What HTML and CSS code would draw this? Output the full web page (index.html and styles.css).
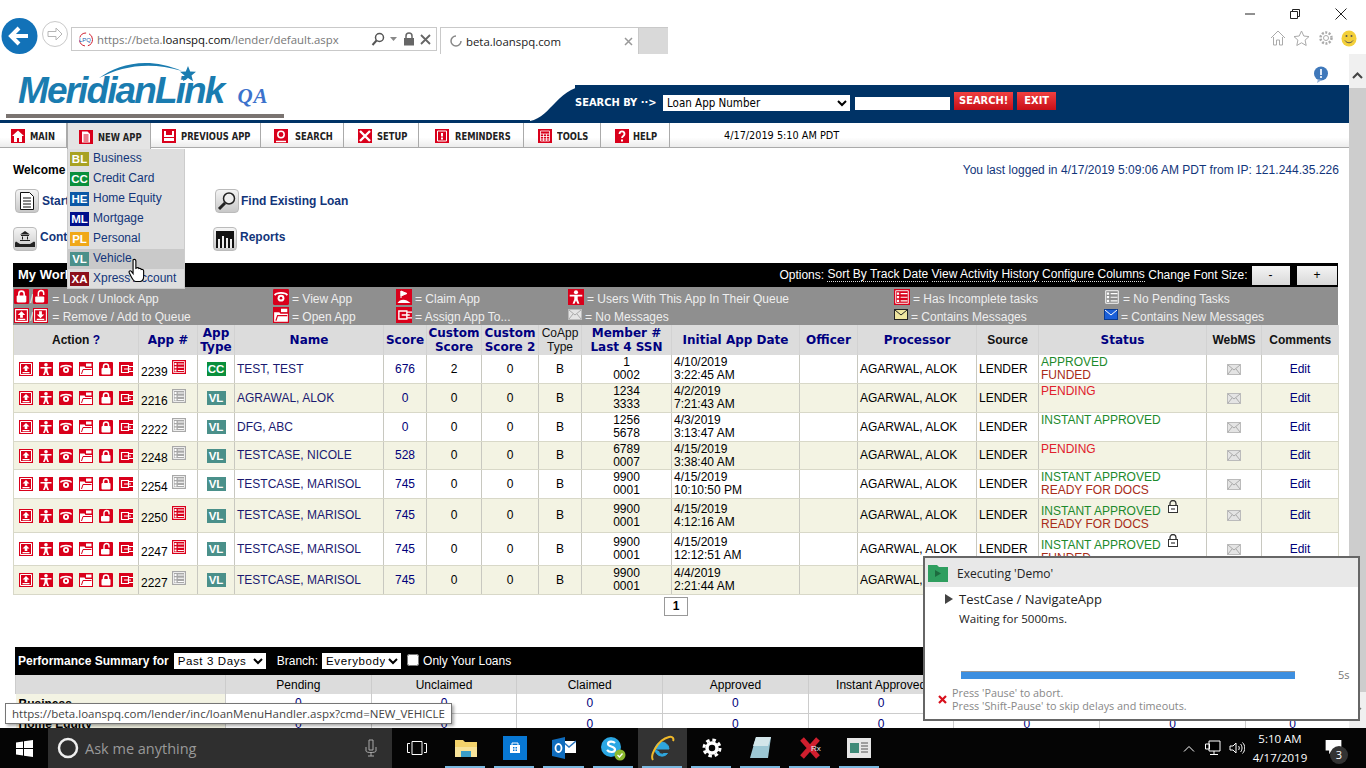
FILE: index.html
```html
<!DOCTYPE html>
<html lang="en">
<head>
  <meta charset="utf-8">
  <title>MeridianLink QA</title>
  <link rel="stylesheet" href="styles.css">
</head>
<body>

<svg class="defs" width="0" height="0" aria-hidden="true">
  <symbol id="i-queue" viewBox="0 0 14 14"><rect width="14" height="14" fill="#d9001b"/><path d="M1.500 1.500h11v11h-11z" fill="none" stroke="#fff"/><path d="M7 3l3.500 3.500H8.300V9H5.700V6.500H3.500zM3.500 10h7v1.300h-7z" fill="#fff"/></symbol>
  <symbol id="i-add" viewBox="0 0 14 14"><rect width="14" height="14" fill="#d9001b"/><path d="M1.500 1.500h11v11h-11z" fill="none" stroke="#fff"/><path d="M7 9.500l-3.500-3.500h2.200V3h2.600v3h2.200zM3.500 10h7v1.300h-7z" fill="#fff"/></symbol>
  <symbol id="i-user" viewBox="0 0 14 14"><rect width="14" height="14" fill="#d9001b"/><circle cx="7" cy="2.800" r="1.800" fill="#fff"/><path d="M1.500 5h11v1.500H8.500V9l1.500 4H8.300L7 10l-1.300 3H4l1.500-4V6.500h-4z" fill="#fff"/></symbol>
  <symbol id="i-view" viewBox="0 0 14 14"><rect width="14" height="14" rx="1" fill="#d9001b"/><path d="M1.500 5.500C3 2.800 11 2.800 12.500 5.500" fill="none" stroke="#fff" stroke-width="1.500"/><circle cx="7" cy="8" r="3" fill="#fff"/><circle cx="7" cy="8" r="1.200" fill="#d9001b"/></symbol>
  <symbol id="i-open" viewBox="0 0 14 14"><rect width="14" height="14" fill="#d9001b"/><path d="M1 4.500h4.500l1 1.500H13v7H1z" fill="#fff"/><path d="M2.500 12l1.500-4.500h8.500" fill="none" stroke="#d9001b"/><path d="M7 1.500h5.500v3H7z" fill="#fff"/></symbol>
  <symbol id="i-lock" viewBox="0 0 14 14"><rect width="14" height="14" rx="1" fill="#d9001b"/><rect x="2.500" y="6" width="9" height="6.500" rx="1" fill="#fff"/><path d="M4.500 6.500V4.500a2.500 2.500 0 0 1 5 0v2" fill="none" stroke="#fff" stroke-width="1.500"/></symbol>
  <symbol id="i-unlock" viewBox="0 0 14 14"><rect width="14" height="14" rx="1" fill="#d9001b"/><rect x="2" y="7" width="8.500" height="5.500" rx="1" fill="#fff"/><path d="M5 7V4a2.500 2.500 0 0 1 5 0v1.500" fill="none" stroke="#fff" stroke-width="1.400"/></symbol>
  <symbol id="i-assign" viewBox="0 0 14 14"><rect width="14" height="14" fill="#d9001b"/><path d="M2.500 3.500h7v7h-7zM9.500 4.500H14M9.500 9.500H14M5 7h7" fill="none" stroke="#fff" stroke-width="1.200"/></symbol>
  <symbol id="i-claim" viewBox="0 0 16 16"><rect width="16" height="16" fill="#d9001b"/><path d="M5 2v7M5 2l6 2.500L5 7z" stroke="#fff" fill="#fff"/><path d="M1.500 14C4 9.500 10 9.500 14.500 14z" fill="#fff"/></symbol>
  <symbol id="i-tasks" viewBox="0 0 14 14"><rect width="14" height="14" fill="currentColor"/><path d="M1.500 1.500h11v11h-11z" fill="none" stroke="#fff" stroke-width=".8"/><path d="M2.500 3h2v2h-2zM2.500 6.200h2v2h-2zM2.500 9.400h2v2h-2zM5.800 3.500h6v1h-6zM5.800 6.700h6v1h-6zM5.800 9.900h6v1h-6z" fill="#fff"/></symbol>
  <symbol id="i-mail" viewBox="0 0 14 11"><rect x=".5" y=".5" width="13" height="10" fill="#e4e4e4" stroke="#bbb"/><path d="M1 1l6 5 6-5M1 10l4-5M13 10L9 5" fill="none" stroke="#aaa"/></symbol>
  <symbol id="i-smlock" viewBox="0 0 12 13"><path d="M3 6V3.500a3 3 0 0 1 6 0V6" fill="none" stroke="#333" stroke-width="1.300"/><rect x="1.500" y="5.500" width="9" height="7" fill="#fff" stroke="#333"/><path d="M4 8h4v2H4z" fill="#888"/></symbol>
</svg>

<!-- browser frame -->
<div class="chrome">
  <div class="nav-btns">
    <svg class="back" width="38" height="36" viewBox="0 0 38 36"><circle cx="18.500" cy="18" r="18" fill="#1272b8"/><path d="M27 18H11M18 10l-8 8 8 8" fill="none" stroke="#fff" stroke-width="4"/></svg>
    <svg class="fwd" width="28" height="28" viewBox="0 0 28 28"><circle cx="14" cy="14" r="12.500" fill="#fff" stroke="#c9c9c9"/><path d="M7 11.500h8V8l6 6-6 6v-3.500H7z" fill="none" stroke="#b5b5b5"/></svg>
  </div>
  <div class="addr">
    <svg class="fav" width="15" height="15" viewBox="0 0 15 15"><circle cx="8" cy="7.500" r="6.500" fill="#fff" stroke="#d02030" stroke-dasharray="8 3"/><text x="1" y="10" font-size="6" font-family="Liberation Sans" fill="#1a5fb0">LPQ</text></svg>
    <span class="url">https://beta.<b>loanspq.com</b>/lender/default.aspx</span>
    <svg width="14" height="14" viewBox="0 0 14 14"><circle cx="8.500" cy="5.500" r="4" fill="none" stroke="#555" stroke-width="1.500"/><path d="M5.500 8.500L1.500 13" stroke="#555" stroke-width="2"/></svg>
    <svg width="8" height="6" viewBox="0 0 8 6"><path d="M0 1h7L3.500 5z" fill="#888"/></svg>
    <svg width="12" height="14" viewBox="0 0 12 14"><path d="M3 6V4a3 3 0 0 1 6 0v2" fill="none" stroke="#666" stroke-width="1.500"/><rect x="1" y="6" width="10" height="7.500" fill="#666"/></svg>
    <svg width="11" height="11" viewBox="0 0 11 11"><path d="M1 1l9 9M10 1l-9 9" stroke="#666" stroke-width="1.800"/></svg>
  </div>
  <div class="tab">
    <svg width="12" height="12" viewBox="0 0 12 12"><path d="M6 1a5 5 0 1 0 5 5" fill="none" stroke="#888" stroke-width="1.500"/></svg>
    <span class="tab-title">beta.loanspq.com</span>
    <svg class="tab-x" width="9" height="9" viewBox="0 0 9 9"><path d="M1 1l7 7M8 1L1 8" stroke="#999" stroke-width="1.500"/></svg>
  </div>
  <div class="new-tab"></div>
  <div class="chrome-right">
    <div class="win-btns">
      <svg width="10" height="10" viewBox="0 0 10 10"><path d="M0 5h10" stroke="#222"/></svg>
      <svg width="10" height="10" viewBox="0 0 10 10"><path d="M.5 2.500h7v7h-7zM2.500 2.500v-2h7v7h-2" fill="none" stroke="#222"/></svg>
      <svg width="12" height="12" viewBox="0 0 12 12"><path d="M.5.500l11 11M11.500.500l-11 11" stroke="#222"/></svg>
    </div>
    <div class="tool-btns">
      <svg width="16" height="16" viewBox="0 0 16 16"><path d="M1 8l7-7 7 7M3.500 7v8h3v-5h3v5h3V7" fill="none" stroke="#aaa"/></svg>
      <svg width="17" height="17" viewBox="0 0 17 17"><path d="M8.500 1l2.300 5 5.200.6-3.900 3.500 1.100 5.400-4.700-2.700-4.700 2.700 1.100-5.400L1 6.600 6.200 6z" fill="none" stroke="#aaa"/></svg>
      <svg width="16" height="16" viewBox="0 0 16 16"><circle cx="8" cy="8" r="2.500" fill="none" stroke="#aaa"/><circle cx="8" cy="8" r="5.500" fill="none" stroke="#aaa" stroke-width="2.500" stroke-dasharray="2 1.500"/></svg>
      <svg width="16" height="17" viewBox="0 0 16 17"><ellipse cx="8" cy="8.500" rx="7.500" ry="8" fill="#f3cf3a"/><circle cx="5.500" cy="6" r="1" fill="#555"/><circle cx="10.500" cy="6" r="1" fill="#555"/><path d="M4 10.500c2 3 6 3 8 0" fill="none" stroke="#555"/></svg>
    </div>
  </div>
</div>

<div class="frame">
  <div class="page">

    <header class="masthead">
      <div class="logo-side">
        <div class="logo">
          <span class="logo-name">MeridianLink</span><span class="logo-qa">QA</span>
          <svg class="logo-arc" width="100" height="30" viewBox="0 0 100 30"><path d="M1 20C20 6 50-2 84 13C52 3 24 8 1 20z" fill="#1a7cb0"/><path d="M90 8l2.200 5.500 5.800.3-4.500 3.700 1.500 5.700-5-3.200-5 3.200 1.500-5.700-4.500-3.700 5.800-.3z" fill="#1a7cb0"/></svg>
        </div>
        <div class="logo-rule"></div>
      </div>
      <div class="mast-right">
        <div class="mast-top">
          <svg width="16" height="17" viewBox="0 0 16 17"><circle cx="8" cy="7.500" r="7" fill="#3f78ba"/><path d="M5 13l-1 4 5-3z" fill="#8fb0d8"/><path d="M7 3h2v6H7zM7 10h2v2H7z" fill="#dde8f6"/></svg>
        </div>
        <div class="band">
          <svg class="band-curve" width="74" height="38" viewBox="0 0 74 38"><path d="M0 36C22 32 28 0 62 0h12v38H0z" fill="#003366"/></svg>
          <div class="band-fill">
            <span class="search-by">SEARCH BY ··&gt;</span>
            <select class="search-sel"><option>Loan App Number</option></select>
            <input class="search-box" type="text">
            <button class="red-btn">SEARCH!</button>
            <button class="red-btn exit">EXIT</button>
          </div>
        </div>
      </div>
    </header>

    <nav class="menu">
      <a class="menu-item w-main"><svg class="menu-ic" viewBox="0 0 14 14"><rect width="14" height="14" fill="#d9001b"/><path d="M7 1.500L1 7h2v6h3V9h2v4h3V7h2z" fill="#fff"/></svg><span class="menu-text">MAIN</span></a>
      <a class="menu-item w-new on"><svg class="menu-ic" viewBox="0 0 14 14"><rect width="14" height="14" fill="#d9001b"/><path d="M3 1.500h5.500L11 4v8.500H3z" fill="#fff"/><path d="M4.500 5h5M4.500 7h5M4.500 9h5M4.500 11h5" stroke="#d9001b"/></svg><span class="menu-text">NEW APP</span></a>
      <a class="menu-item w-prev"><svg class="menu-ic" viewBox="0 0 14 14"><rect width="14" height="14" fill="#d9001b"/><path d="M2 2h10v10H2z" fill="#fff"/><path d="M4 1h6v5H4z" fill="#d9001b"/><path d="M2 8h10v1H2z" fill="#d9001b"/></svg><span class="menu-text">PREVIOUS APP</span></a>
      <a class="menu-item w-search"><svg class="menu-ic" viewBox="0 0 14 14"><rect width="14" height="14" fill="#d9001b"/><circle cx="7" cy="5.500" r="3.200" fill="none" stroke="#fff" stroke-width="1.500"/><path d="M2 12.500h10" stroke="#fff" stroke-width="1.500"/></svg><span class="menu-text">SEARCH</span></a>
      <a class="menu-item w-setup"><svg class="menu-ic" viewBox="0 0 14 14"><rect width="14" height="14" fill="#d9001b"/><path d="M2 2l10 10M12 2L2 12" stroke="#fff" stroke-width="2.400"/></svg><span class="menu-text">SETUP</span></a>
      <a class="menu-item w-rem"><svg class="menu-ic" viewBox="0 0 14 14"><rect width="14" height="14" fill="#d9001b"/><path d="M2.500 2h9v10h-9z" fill="none" stroke="#fff"/><path d="M6 4h2v3.500H6zM6 8.500h2v2H6z" fill="#fff"/></svg><span class="menu-text">REMINDERS</span></a>
      <a class="menu-item w-tools"><svg class="menu-ic" viewBox="0 0 14 14"><rect width="14" height="14" fill="#d9001b"/><path d="M2.500 2h9v10h-9zM2.500 5h9M2.500 7.500h9M2.500 10h9M5.500 5v7M8.500 5v7" fill="none" stroke="#fff" stroke-width=".8"/></svg><span class="menu-text">TOOLS</span></a>
      <a class="menu-item w-help"><svg class="menu-ic" viewBox="0 0 14 14"><rect width="14" height="14" fill="#d9001b"/><path d="M4.500 5c0-3.500 5-3.500 5 0 0 2-2.500 2-2.500 4" fill="none" stroke="#fff" stroke-width="1.800"/><path d="M6 10.500h2v2H6z" fill="#fff"/></svg><span class="menu-text">HELP</span></a>
      <span class="menu-date">4/17/2019 5:10 AM PDT</span>
    </nav>

    <div class="welcome">
      <b>Welcome</b>
      <span class="last-login">You last logged in 4/17/2019 5:09:06 AM PDT from IP: 121.244.35.226</span>
    </div>

    <div class="quick">
      <a class="quick-link q-a"><span class="quick-ic"><svg width="16" height="18" viewBox="0 0 16 18"><path d="M1.500.5h9l4 4v13h-13z" fill="#fff" stroke="#111"/><path d="M4 6h8M4 9h8M4 12h8M4 15h8" stroke="#111"/></svg></span>Start New Loan</a>
      <a class="quick-link q-b"><span class="quick-ic"><svg width="20" height="20" viewBox="0 0 20 20"><circle cx="12" cy="7.500" r="5.500" fill="#eee" stroke="#222" stroke-width="1.500"/><path d="M8 12l-6 6" stroke="#222" stroke-width="3"/></svg></span>Find Existing Loan</a>
      <a class="quick-link q-c"><span class="quick-ic"><svg width="20" height="18" viewBox="0 0 20 18"><path d="M10 1l5 3.500H5zM6 5h8v1H6zM7 6.500h1v3H7zM12 6.500h1v3h-1zM5 10h10v1H5zM1 11.500l4 2.500H-1zM19 11.500l3 2.500h-7zM0 14h20v3H0z" fill="#222"/></svg></span>Contact Us</a>
      <a class="quick-link q-d"><span class="quick-ic"><svg width="18" height="18" viewBox="0 0 18 18"><path d="M0 1h18v17H0z" fill="#111"/><path d="M2 9h2v9H2zM6 6h2v12H6zM10 8h2v10h-2zM14 9h2v9h-2z" fill="#eee"/></svg></span>Reports</a>
    </div>

    <div class="work-bar">
      <b class="work-title">My Work Queue</b>
      <div class="options">
        Options: <a>Sort By Track Date</a> <a>View Activity History</a> <a>Configure Columns</a> Change Font Size:
        <button class="size-btn">-</button><button class="size-btn">+</button>
      </div>
    </div>

    <div class="legend">
      <span><span class="pair"><svg class="lg"><use href="#i-lock"/></svg>/<svg class="lg"><use href="#i-unlock"/></svg></span> = Lock / Unlock App</span>
      <span><svg class="lg"><use href="#i-view"/></svg> = View App</span>
      <span><svg class="lg"><use href="#i-claim"/></svg> = Claim App</span>
      <span><svg class="lg"><use href="#i-user"/></svg> = Users With This App In Their Queue</span>
      <span><svg class="lg red"><use href="#i-tasks"/></svg> = Has Incomplete tasks</span>
      <span><svg class="lg nopend"><use href="#i-tasks"/></svg> = No Pending Tasks</span>
      <span><span class="pair"><svg class="lg"><use href="#i-queue"/></svg>/<svg class="lg"><use href="#i-add"/></svg></span> = Remove / Add to Queue</span>
      <span><svg class="lg"><use href="#i-open"/></svg> = Open App</span>
      <span><svg class="lg"><use href="#i-assign"/></svg> = Assign App To...</span>
      <span><svg class="lg-mail"><use href="#i-mail"/></svg> = No Messages</span>
      <span><svg class="lg-mail yellow" viewBox="0 0 14 11"><rect x=".5" y=".5" width="13" height="10" fill="#efe6a0" stroke="#222"/><path d="M1 1l6 5 6-5" fill="none" stroke="#222"/></svg> = Contains Messages</span>
      <span><svg class="lg-mail" viewBox="0 0 14 11"><rect x=".5" y=".5" width="13" height="10" fill="#1a5fd8" stroke="#0a3a90"/><path d="M1 1l6 5 6-5" fill="none" stroke="#fff"/></svg> = Contains New Messages</span>
    </div>

    <table class="apps">
      <colgroup>
        <col class="c-action"><col class="c-num"><col class="c-type"><col class="c-name"><col class="c-score"><col class="c-cust"><col class="c-cust2"><col class="c-coapp"><col class="c-member"><col class="c-date"><col class="c-officer"><col class="c-proc"><col class="c-src"><col class="c-status"><col class="c-webms"><col class="c-comm">
      </colgroup>
      <thead>
        <tr>
          <th class="plain">Action <span class="navy">?</span></th>
          <th>App #</th><th>App<br>Type</th><th>Name</th><th>Score</th><th>Custom<br>Score</th><th>Custom<br>Score 2</th>
          <th class="thin">CoApp<br>Type</th><th>Member #<br>Last 4 SSN</th><th>Initial App Date</th><th>Officer</th><th>Processor</th>
          <th class="plain">Source</th><th>Status</th><th class="plain">WebMS</th><th class="plain">Comments</th>
        </tr>
      </thead>
      <tbody>
        <tr class="h28">
          <td><div class="acts"><svg><use href="#i-queue"/></svg><svg><use href="#i-user"/></svg><svg><use href="#i-view"/></svg><svg><use href="#i-open"/></svg><svg><use href="#i-lock"/></svg><svg><use href="#i-assign"/></svg></div></td>
          <td class="num">2239<svg class="task red"><use href="#i-tasks"/></svg></td>
          <td class="ctr"><span class="badge cc">CC</span></td>
          <td class="name">TEST, TEST</td><td class="ctr link">676</td><td class="ctr">2</td><td class="ctr">0</td><td class="ctr">B</td>
          <td class="ctr">1<br>0002</td><td>4/10/2019<br>3:22:45 AM</td><td></td><td>AGARWAL, ALOK</td><td>LENDER</td>
          <td class="status"><span class="ok">APPROVED</span><br><span class="fund">FUNDED</span></td>
          <td class="ctr"><svg class="mail"><use href="#i-mail"/></svg></td><td class="ctr link">Edit</td>
        </tr>
        <tr class="alt h29">
          <td><div class="acts"><svg><use href="#i-queue"/></svg><svg><use href="#i-user"/></svg><svg><use href="#i-view"/></svg><svg><use href="#i-open"/></svg><svg><use href="#i-lock"/></svg><svg><use href="#i-assign"/></svg></div></td>
          <td class="num">2216<svg class="task grey"><use href="#i-tasks"/></svg></td>
          <td class="ctr"><span class="badge vl">VL</span></td>
          <td class="name">AGRAWAL, ALOK</td><td class="ctr link">0</td><td class="ctr">0</td><td class="ctr">0</td><td class="ctr">B</td>
          <td class="ctr">1234<br>3333</td><td>4/2/2019<br>7:21:43 AM</td><td></td><td>AGARWAL, ALOK</td><td>LENDER</td>
          <td class="status"><span class="pend">PENDING</span><br>&nbsp;</td>
          <td class="ctr"><svg class="mail"><use href="#i-mail"/></svg></td><td class="ctr link">Edit</td>
        </tr>
        <tr class="h29">
          <td><div class="acts"><svg><use href="#i-queue"/></svg><svg><use href="#i-user"/></svg><svg><use href="#i-view"/></svg><svg><use href="#i-open"/></svg><svg><use href="#i-lock"/></svg><svg><use href="#i-assign"/></svg></div></td>
          <td class="num">2222<svg class="task grey"><use href="#i-tasks"/></svg></td>
          <td class="ctr"><span class="badge vl">VL</span></td>
          <td class="name">DFG, ABC</td><td class="ctr link">0</td><td class="ctr">0</td><td class="ctr">0</td><td class="ctr">B</td>
          <td class="ctr">1256<br>5678</td><td>4/3/2019<br>3:13:47 AM</td><td></td><td>AGARWAL, ALOK</td><td>LENDER</td>
          <td class="status"><span class="ok">INSTANT APPROVED</span><br>&nbsp;</td>
          <td class="ctr"><svg class="mail"><use href="#i-mail"/></svg></td><td class="ctr link">Edit</td>
        </tr>
        <tr class="alt h28">
          <td><div class="acts"><svg><use href="#i-queue"/></svg><svg><use href="#i-user"/></svg><svg><use href="#i-view"/></svg><svg><use href="#i-open"/></svg><svg><use href="#i-lock"/></svg><svg><use href="#i-assign"/></svg></div></td>
          <td class="num">2248<svg class="task grey"><use href="#i-tasks"/></svg></td>
          <td class="ctr"><span class="badge vl">VL</span></td>
          <td class="name">TESTCASE, NICOLE</td><td class="ctr link">528</td><td class="ctr">0</td><td class="ctr">0</td><td class="ctr">B</td>
          <td class="ctr">6789<br>0007</td><td>4/15/2019<br>3:38:40 AM</td><td></td><td>AGARWAL, ALOK</td><td>LENDER</td>
          <td class="status"><span class="pend">PENDING</span><br>&nbsp;</td>
          <td class="ctr"><svg class="mail"><use href="#i-mail"/></svg></td><td class="ctr link">Edit</td>
        </tr>
        <tr class="h29">
          <td><div class="acts"><svg><use href="#i-queue"/></svg><svg><use href="#i-user"/></svg><svg><use href="#i-view"/></svg><svg><use href="#i-open"/></svg><svg><use href="#i-lock"/></svg><svg><use href="#i-assign"/></svg></div></td>
          <td class="num">2254<svg class="task grey"><use href="#i-tasks"/></svg></td>
          <td class="ctr"><span class="badge vl">VL</span></td>
          <td class="name">TESTCASE, MARISOL</td><td class="ctr link">745</td><td class="ctr">0</td><td class="ctr">0</td><td class="ctr">B</td>
          <td class="ctr">9900<br>0001</td><td>4/15/2019<br>10:10:50 PM</td><td></td><td>AGARWAL, ALOK</td><td>LENDER</td>
          <td class="status"><span class="ok">INSTANT APPROVED</span><br><span class="fund">READY FOR DOCS</span></td>
          <td class="ctr"><svg class="mail"><use href="#i-mail"/></svg></td><td class="ctr link">Edit</td>
        </tr>
        <tr class="alt h34">
          <td><div class="acts"><svg><use href="#i-queue"/></svg><svg><use href="#i-user"/></svg><svg><use href="#i-view"/></svg><svg><use href="#i-open"/></svg><svg><use href="#i-unlock"/></svg><svg><use href="#i-assign"/></svg></div></td>
          <td class="num">2250<svg class="task red"><use href="#i-tasks"/></svg></td>
          <td class="ctr"><span class="badge vl">VL</span></td>
          <td class="name">TESTCASE, MARISOL</td><td class="ctr link">745</td><td class="ctr">0</td><td class="ctr">0</td><td class="ctr">B</td>
          <td class="ctr">9900<br>0001</td><td>4/15/2019<br>4:12:16 AM</td><td></td><td>AGARWAL, ALOK</td><td>LENDER</td>
          <td class="status"><span class="ok">INSTANT APPROVED</span><svg class="smlock"><use href="#i-smlock"/></svg><br><span class="fund">READY FOR DOCS</span></td>
          <td class="ctr"><svg class="mail"><use href="#i-mail"/></svg></td><td class="ctr link">Edit</td>
        </tr>
        <tr class="h33">
          <td><div class="acts"><svg><use href="#i-queue"/></svg><svg><use href="#i-user"/></svg><svg><use href="#i-view"/></svg><svg><use href="#i-open"/></svg><svg><use href="#i-unlock"/></svg><svg><use href="#i-assign"/></svg></div></td>
          <td class="num">2247<svg class="task red"><use href="#i-tasks"/></svg></td>
          <td class="ctr"><span class="badge vl">VL</span></td>
          <td class="name">TESTCASE, MARISOL</td><td class="ctr link">745</td><td class="ctr">0</td><td class="ctr">0</td><td class="ctr">B</td>
          <td class="ctr">9900<br>0001</td><td>4/15/2019<br>12:12:51 AM</td><td></td><td>AGARWAL, ALOK</td><td>LENDER</td>
          <td class="status"><span class="ok">INSTANT APPROVED</span><svg class="smlock"><use href="#i-smlock"/></svg><br><span class="fund">FUNDED</span></td>
          <td class="ctr"><svg class="mail"><use href="#i-mail"/></svg></td><td class="ctr link">Edit</td>
        </tr>
        <tr class="alt h29">
          <td><div class="acts"><svg><use href="#i-queue"/></svg><svg><use href="#i-user"/></svg><svg><use href="#i-view"/></svg><svg><use href="#i-open"/></svg><svg><use href="#i-lock"/></svg><svg><use href="#i-assign"/></svg></div></td>
          <td class="num">2227<svg class="task grey"><use href="#i-tasks"/></svg></td>
          <td class="ctr"><span class="badge vl">VL</span></td>
          <td class="name">TESTCASE, MARISOL</td><td class="ctr link">745</td><td class="ctr">0</td><td class="ctr">0</td><td class="ctr">B</td>
          <td class="ctr">9900<br>0001</td><td>4/4/2019<br>2:21:44 AM</td><td></td><td>AGARWAL, ALOK</td><td>LENDER</td>
          <td class="status"><span class="pend">PENDING</span><br>&nbsp;</td>
          <td class="ctr"><svg class="mail"><use href="#i-mail"/></svg></td><td class="ctr link">Edit</td>
        </tr>
      </tbody>
    </table>

    <div class="pager"><span class="page-no">1</span></div>

    <div class="perf-bar">
      <b>Performance Summary for</b>
      <select class="perf-sel s-days"><option>Past 3 Days</option></select>
      <span class="perf-branch">Branch:</span>
      <select class="perf-sel s-branch"><option>Everybody</option></select>
      <input class="perf-check" type="checkbox">
      <span>Only Your Loans</span>
    </div>

    <table class="perf">
      <colgroup><col class="p-label"><col span="7" class="p-col"><col class="p-last"></colgroup>
      <thead><tr><th></th><th>Pending</th><th>Unclaimed</th><th>Claimed</th><th>Approved</th><th>Instant Approved</th><th>Declined</th><th>Funded</th><th>Total</th></tr></thead>
      <tbody>
        <tr><th>Business</th><td>0</td><td>0</td><td>0</td><td>0</td><td>0</td><td>0</td><td>0</td><td>0</td></tr>
        <tr><th>Home Equity</th><td>0</td><td>0</td><td>0</td><td>0</td><td>0</td><td>0</td><td>0</td><td>0</td></tr>
      </tbody>
    </table>

    <!-- open "new app" dropdown -->
    <ul class="dropdown">
      <li><span class="badge bl">BL</span>Business</li>
      <li><span class="badge cc">CC</span>Credit Card</li>
      <li><span class="badge he">HE</span>Home Equity</li>
      <li><span class="badge ml">ML</span>Mortgage</li>
      <li><span class="badge pl">PL</span>Personal</li>
      <li class="hover"><span class="badge vl">VL</span>Vehicle</li>
      <li><span class="badge xa">XA</span>Xpress Account</li>
    </ul>
    <svg class="hand" width="18" height="25" viewBox="0 0 16 22"><path d="M4.500 1.500c1.200-1 2.500 0 2.500 1V9l1-.5c1-.3 1.500.2 1.700.8 1-.4 1.800 0 2 .8 1-.3 2 .2 2.200 1.200v5c0 2-1 4-3 4.500H7c-2 0-3-2-4-4l-2-4c-.4-1.500 1-2 2-1l1.500 2z" fill="#fff" stroke="#000"/></svg>
  </div>

  <div class="scrollbar">
    <div class="sb-end"><svg width="11" height="7" viewBox="0 0 11 7"><path d="M1 6l4.500-4.500L10 6" fill="none" stroke="#444" stroke-width="2"/></svg></div>
    <div class="sb-thumb"></div>
    <div class="sb-low"><svg width="9" height="6" viewBox="0 0 9 6"><path d="M1 1l3.500 3.500L8 1" fill="none" stroke="#777" stroke-width="1.500"/></svg></div>
  </div>

  <div class="tooltip">https://beta.loanspq.com/lender/inc/loanMenuHandler.aspx?cmd=NEW_VEHICLE</div>

  <div class="runner">
    <div class="runner-head">
      <svg width="20" height="17" viewBox="0 0 20 17"><path d="M0 0h9l2 2h9v15H0z" fill="#2f9e5f"/><path d="M7 5l6 3.500L7 12z" fill="#1d6b3f"/></svg>
      Executing 'Demo'
    </div>
    <div class="runner-step"><svg width="9" height="10" viewBox="0 0 9 10"><path d="M0 0l8 5-8 5z" fill="#444"/></svg>TestCase / NavigateApp</div>
    <div class="runner-wait">Waiting for 5000ms.</div>
    <div class="runner-prog">
      <div class="prog-track"><div class="prog-fill"></div></div>
      <span class="prog-time">5s</span>
    </div>
    <div class="runner-foot">
      <svg width="9" height="9" viewBox="0 0 9 9"><path d="M1 1l7 7M8 1L1 8" stroke="#d8101c" stroke-width="2.200"/></svg>
      <div>Press 'Pause' to abort.<br>Press 'Shift-Pause' to skip delays and timeouts.</div>
    </div>
  </div>
</div>

<!-- windows taskbar -->
<footer class="taskbar">
  <div class="start"><svg width="17" height="17" viewBox="0 0 17 17"><path d="M0 2.400L7 1.400V8H0zM8 1.200L17 0v8H8zM0 9h7v6.600L0 14.600zM8 9h9v8l-9-1.200z" fill="#fff"/></svg></div>
  <div class="cortana">
    <svg width="22" height="22" viewBox="0 0 22 22"><circle cx="11" cy="11" r="9" fill="none" stroke="#eee" stroke-width="2.500"/></svg>
    <span class="ask">Ask me anything</span>
    <svg class="mic" width="12" height="18" viewBox="0 0 12 18"><path d="M4 1h4v10H4zM1 8v4c0 2 10 2 10 0V8M6 14v3M3 17h6" fill="none" stroke="#aaa"/></svg>
  </div>
  <div class="tb-app view"><svg width="20" height="14" viewBox="0 0 20 14"><path d="M5 .5h10v13H5zM3 2.500H.5v9H3M17 2.500h2.500v9H17" fill="none" stroke="#fff"/></svg></div>
  <div class="tb-app run"><svg width="22" height="19" viewBox="0 0 22 19"><path d="M0 1h8l2 2h12v15H0z" fill="#f3d36b"/><path d="M0 8h22v10H0z" fill="#f8e49a"/><path d="M6 12h10v6H6z" fill="#3a9ec9"/></svg></div>
  <div class="tb-app run"><svg width="24" height="24" viewBox="0 0 24 24"><rect width="24" height="24" fill="#0878d4"/><path d="M7 9h10v8H7z" fill="#fff"/><path d="M9 9V7h6v2" fill="none" stroke="#fff"/><path d="M10 11h1.500v1.500H10zM12.500 11H14v1.500h-1.500zM10 13.500h1.500V15H10zM12.500 13.500H14V15h-1.500z" fill="#0878d4"/></svg></div>
  <div class="tb-app run"><svg width="24" height="22" viewBox="0 0 24 22"><path d="M10 4h14v12H10z" fill="#fff"/><path d="M10 4l7 6 7-6" fill="none" stroke="#2a76c0" stroke-width="1.500"/><path d="M0 3l13-3v22L0 19z" fill="#0f6cbd"/><ellipse cx="6.500" cy="11" rx="3" ry="4" fill="none" stroke="#fff" stroke-width="1.800"/></svg></div>
  <div class="tb-app run"><svg width="26" height="26" viewBox="0 0 26 26"><circle cx="11" cy="12" r="10" fill="#2ba7e3"/><path d="M15 8c-2-2-7-2-7 1s7 2 7 5.500-6 3-8 .5" fill="none" stroke="#fff" stroke-width="2.200"/><circle cx="20" cy="20" r="5.500" fill="#8ab92e"/><path d="M17.500 20l2 2 3-3.500" fill="none" stroke="#fff" stroke-width="1.300"/></svg></div>
  <div class="tb-app run active"><svg width="26" height="26" viewBox="0 0 26 26"><path d="M6 14h14a7 7 0 1 0-1.500 4.500h-3.500a3.500 3.500 0 0 1-5.500-2.500M9.500 11.500h7a3.500 3.500 0 0 0-7 0z" fill="#2ea6de" stroke="#2ea6de"/><path d="M4 25C1 21 8 5 20 2c4-1 5 2 4 4" fill="none" stroke="#f0b92a" stroke-width="2"/></svg></div>
  <div class="tb-app run"><svg width="20" height="20" viewBox="0 0 20 20"><circle cx="10" cy="10" r="5" fill="none" stroke="#fff" stroke-width="3.500"/><circle cx="10" cy="10" r="8" fill="none" stroke="#fff" stroke-width="3" stroke-dasharray="3.500 2.800"/></svg></div>
  <div class="tb-app run"><svg width="24" height="24" viewBox="0 0 24 24"><path d="M7 1h15l-3 21H1z" fill="#9cc7d4"/><path d="M7 1h15l-3 9H4z" fill="#d3e6ea"/></svg></div>
  <div class="tb-app run"><svg width="24" height="24" viewBox="0 0 24 24"><path d="M4 21L20 3M4 3l16 18" stroke="#d01f2e" stroke-width="5"/><text x="13" y="15" font-size="8" font-family="Liberation Sans" fill="#eee">Rx</text></svg></div>
  <div class="tb-app run"><svg width="24" height="20" viewBox="0 0 24 20"><rect width="24" height="20" fill="#e6e6e6"/><path d="M3 5h9v10H3z" fill="#3f8a78"/><path d="M14 5h7M14 8h7M14 11h7M14 14h7" stroke="#555"/></svg></div>
  <div class="tray">
    <svg class="tray-up" width="12" height="7" viewBox="0 0 12 7"><path d="M1 6.500l5-5 5 5" fill="none" stroke="#fff"/></svg>
    <svg width="16" height="16" viewBox="0 0 16 16"><path d="M4 1h11v10H4zM9 11v3M5 14.500h8M.5 4h4v5h-4z" fill="#000" stroke="#fff"/></svg>
    <svg width="16" height="14" viewBox="0 0 16 14"><path d="M1 5h3l3-3v10L4 9H1z M9.500 5c1 1 1 3 0 4M11.500 3c2 2 2 6 0 8M13.500 1.500c3 3 3 8 0 11" fill="none" stroke="#fff"/></svg>
    <div class="clock">5:10 AM<br>4/17/2019</div>
    <div class="notif">
      <svg width="17" height="14" viewBox="0 0 18 16"><path d="M0 0h18v12H8l-4 4v-4H0z" fill="#fff"/></svg>
      <span class="notif-n">3</span>
    </div>
  </div>
</footer>

</body>
</html>
```

FILE: styles.css
```css
* { box-sizing: border-box; }
html, body { margin: 0; height: 100%; }
body {
  width: 1366px; height: 768px; overflow: hidden; position: relative;
  display: flex; flex-direction: column; background: #fff; color: #000;
  font: 12px/14px "Liberation Sans", Arial, sans-serif;
}
svg { flex: none; }
.defs { position: absolute; }

/* browser frame */
.chrome { height: 54px; flex: none; display: flex; align-items: flex-end; overflow: hidden; }
.nav-btns { width: 71px; display: flex; align-items: flex-start; height: 36px; padding-top: 2px; overflow: hidden; }
.back { margin-top: -2px; margin-left: 1px; }
.fwd { margin-left: 2px; margin-top: 0; }
.addr {
  width: 366px; height: 24px; margin-bottom: 3px; border: 1px solid #c9c9c9;
  display: flex; align-items: center; gap: 5px; padding: 0 5px 0 6px;
  font: 11.400px "Open Sans", sans-serif; color: #777;
}
.url { flex: 1; white-space: nowrap; margin-left: -1px; }
.url b { font-weight: 400; color: #111; }
.tab {
  width: 199px; height: 27px; margin-left: 3px; border: 1px solid #c9c9c9; border-bottom: 0;
  display: flex; align-items: center; padding: 0 5px 0 9px;
  font: 11.400px "Open Sans", sans-serif; color: #222;
}
.tab-title { flex: 1; margin-left: 4px; }
.new-tab { width: 29px; height: 27px; background: #d9d9d9; border-top: 1px solid #c9c9c9; }
.chrome-right { flex: 1; height: 54px; display: flex; flex-direction: column; align-items: flex-end; }
.win-btns { display: flex; align-items: center; height: 28px; gap: 35px; padding-right: 19px; }
.tool-btns { display: flex; align-items: center; gap: 7.500px; height: 20px; padding-right: 9px; }

.frame { flex: 1; min-height: 0; display: flex; position: relative; overflow: hidden; }
.page { width: 1349px; position: relative; overflow: hidden; }

/* masthead */
.masthead { height: 69px; display: flex; }
.logo-side { width: 530px; border-bottom: 3px solid #003366; position: relative; padding-left: 6px; padding-top: 18px; }
.logo { position: relative; height: 38px; padding-left: 12px; white-space: nowrap; }
.logo-name { font: italic 700 37px/38px "Liberation Sans", sans-serif; letter-spacing: -1.900px; color: #1a7cb0; }
.logo-qa { font: italic 700 21px/20px "Liberation Serif", serif; color: #3c72cc; margin-left: 14px; letter-spacing: 1px; }
.logo-arc { position: absolute; left: 92px; top: -14px; }
.logo-rule { width: 278px; height: 4px; margin-top: 4px; background: #7a7370; }
.mast-right { flex: 1; display: flex; flex-direction: column; }
.mast-top { height: 31px; display: flex; justify-content: flex-end; align-items: flex-start; padding: 12px 20px 0 0; }
.band { height: 38px; display: flex; }
.band-curve { display: block; }
.band-fill { flex: 1; background: #003366; display: flex; align-items: flex-start; padding-top: 7px; margin-left: -29px; padding-left: 0; }
.search-by { font: 700 11px/18px "DejaVu Sans", sans-serif; font-stretch: condensed; color: #fff; width: 88px; margin-top: 2px; white-space: nowrap; }
.search-sel { width: 187px; height: 16px; margin-top: 3px; border: 0; background: #fff; font: 11.500px "DejaVu Sans", sans-serif; font-stretch: condensed; padding: 0; }
.search-box { width: 95px; height: 13px; margin: 5px 4px 0 5px; border: 0; background: #fff; padding: 0; }
.red-btn {
  height: 18px; border: 0; padding: 0 5px; margin-right: 4px; color: #fff;
  font: 700 11px/18px "DejaVu Sans", sans-serif; font-stretch: condensed;
  background: linear-gradient(#f04040, #c80f18);
}
.red-btn.exit { padding: 0 7px; }

/* main menu */
.menu {
  height: 25px; display: flex; align-items: stretch; border-bottom: 1px solid #aaa;
  background: linear-gradient(#fff 60%, #ececec);
}
.menu-item {
  display: flex; align-items: center; gap: 5px; border-right: 1px solid #aaa; padding: 1px 0 0 11px;
  font: 700 10.500px "DejaVu Sans", sans-serif; font-stretch: condensed; color: #222; white-space: nowrap;
}
.menu-text { transform: scaleX(.885); transform-origin: left center; }
.menu-ic { width: 14px; height: 14px; }
.menu-item.on { background: #e4e4e4; height: 26px; border-left: 1px solid #aaa; }
.w-main { width: 67px; }
.w-new { width: 84px; }
.w-prev { width: 110px; }
.w-search { width: 83px; padding-left: 13px; gap: 7px; }
.w-setup { width: 75px; padding-left: 14px; }
.w-rem { width: 105px; padding-left: 16px; gap: 6px; }
.w-tools { width: 77px; padding-left: 14px; }
.w-help { width: 69px; padding-left: 14px; gap: 4px; }
.menu-date { font: 10.800px/26px "DejaVu Sans", sans-serif; font-stretch: condensed; margin-left: 54px; }

/* welcome area */
.welcome { display: flex; justify-content: space-between; padding: 15px 10px 0 13px; height: 41px; }
.welcome b { font-size: 12px; }
.last-login { color: #12357a; letter-spacing: .03px; }
.quick {
  display: grid; grid-template-columns: 200px 1fr; grid-template-rows: 24px 24px; row-gap: 14px;
  padding-left: 13px; height: 74px;
}
.quick-link { display: flex; align-items: center; gap: 3px; font-weight: 700; color: #12357a; white-space: nowrap; }
.q-a, .q-b { margin-left: 2px; }
.q-b { gap: 2px; }
.q-c, .q-d { align-items: flex-start; line-height: 20px; }
.quick-ic {
  width: 24px; height: 24px; border-radius: 4px; display: flex; align-items: center; justify-content: center;
  background: linear-gradient(#f4f4f4, #c8c8c8); border: 1px solid #bbb; overflow: hidden;
}

/* work queue */
.work-bar {
  margin-left: 13px; width: 1325px; height: 24px; background: #000; color: #fff;
  display: flex; justify-content: space-between; align-items: center; padding: 0 1px 0 5px;
}
.work-title { font-size: 13px; }
.options { display: flex; align-items: center; gap: 3.400px; }
.options a { border-bottom: 1px dotted #ddd; line-height: 13px; }
.size-btn {
  width: 38px; height: 19px; margin-left: .600px; border: 0; padding: 0;
  background: linear-gradient(#f4f4f4, #d8d8d8); font: 12px "Liberation Sans", sans-serif;
}
.size-btn + .size-btn { margin-left: 4px; width: 40px; }
.legend {
  margin-left: 13px; width: 1325px; height: 38px; background: #8f8f8f; color: #eee; padding-top: 2px;
  display: grid; grid-template-columns: 260px 123px 172px 326px 210px 1fr; grid-template-rows: 19px 18px;
  white-space: nowrap;
}
.legend span { display: flex; align-items: center; gap: 3px; }
.legend .pair { gap: 0; margin-left: 1px; }
.lg { width: 16px; height: 16px; margin-top: -4px; }
.pair .lg { width: 15px; height: 15px; margin-right: 1px; }
.lg.red { color: #d9001b; }
.lg.nopend { color: #8f8f8f; }
.lg-mail { width: 14px; height: 11px; margin-top: -5px; }

.apps { margin-left: 13px; width: 1325px; table-layout: fixed; border-collapse: collapse; }
.c-action { width: 125px; } .c-num { width: 59px; } .c-type { width: 37px; } .c-name { width: 149px; }
.c-score { width: 43px; } .c-cust { width: 55px; } .c-cust2 { width: 57px; } .c-coapp { width: 43px; }
.c-member { width: 90px; } .c-date { width: 128px; } .c-officer { width: 58px; } .c-proc { width: 119px; }
.c-src { width: 62px; } .c-status { width: 168px; } .c-webms { width: 55px; } .c-comm { width: 77px; }
.apps th {
  height: 30px; padding: 0; background: #dcdcdc; color: #000080; border-left: 1px solid #d2d2d2;
  font: 700 12px/14px "DejaVu Sans", sans-serif; text-align: center;
}
.apps th.plain { font-family: "Liberation Sans", sans-serif; color: #111; }
.apps th.thin { font: 400 12px/14px "Liberation Sans", sans-serif; color: #111; }
.navy { color: #000080; }
.apps td { padding: 1px 2px 0; border-left: 1px solid #c8c8c0; border-bottom: 1px solid #d8d8c8; line-height: 13px; white-space: nowrap; vertical-align: middle; }
.apps td:first-child, .apps th:first-child { border-left: 1px solid #d8d8c8; }
.apps td:last-child { border-right: 1px solid #d8d8c8; }
.alt td { background: #f3f3e3; }
.h28 td { height: 28px; } .h29 td { height: 29px; } .h33 td { height: 33px; } .h34 td { height: 34px; }
.ctr { text-align: center; }
.link { color: #00007a; }
.name { color: #1a1a70; }
.acts { display: flex; gap: 6px; padding-left: 3px; }
.acts svg { width: 14px; height: 14px; }
.task { width: 14px; height: 14px; margin-left: 4px; vertical-align: 2px; }
.task.red { color: #d9001b; }
.task.grey { color: #a8a8a8; }
.badge {
  display: inline-block; width: 19px; height: 14px; color: #fff; text-align: center;
  font: 700 11.500px/14px "Liberation Sans", sans-serif;
}
.cc { background: #0a8f3c; } .vl { background: #4a908a; } .bl { background: #a8a222; }
.he { background: #0b58a6; } .ml { background: #000f8c; } .pl { background: #f0a818; } .xa { background: #8c0f1a; }
.mail { width: 14px; height: 11px; vertical-align: -2px; }
.ok { color: #1c8a2c; }
.fund { color: #a82c18; }
.pend { color: #e0202c; }
.smlock { width: 12px; height: 13px; margin-left: 6px; vertical-align: 2px; }

.pager { display: flex; justify-content: center; height: 52px; padding: 2px 0 0 3px; }
.page-no { width: 24px; height: 19px; border: 1px solid #999; text-align: center; font-weight: 700; line-height: 17px; }

/* performance summary */
.perf-bar {
  margin-left: 15px; width: 1324px; height: 28px; background: #000; color: #fff;
  display: flex; align-items: center; padding-left: 3px;
}
.perf-sel { height: 16px; border: 0; background: #fff; padding: 0; margin: 0 0 0 5px; font: 11.500px "Liberation Sans", sans-serif; letter-spacing: .6px; }
.s-days { width: 92px; }
.s-branch { width: 79px; margin-left: 4px; }
.perf-branch { margin-left: 11px; }
.perf-check { width: 12px; height: 12px; margin: 0 4px 2px 6px; }
.perf { margin-left: 15px; width: 1324px; table-layout: fixed; border-collapse: collapse; }
.p-label { width: 210px; } .p-col { width: 145.700px; } .p-last { width: 94px; }
.perf thead th { height: 19px; background: #dcdcdc; font-weight: 400; text-align: center; border-left: 1px solid #ccc; padding: 2px 0 0; }
.perf tbody th { height: 20px; background: #f3f3e3; text-align: left; padding: 0 0 0 3px; }
.perf td { text-align: center; color: #00007a; border-left: 1px solid #ccc; border-bottom: 1px solid #ccc; padding: 0; }

/* things lying over the page */
.dropdown {
  position: absolute; left: 67px; top: 95px; width: 118px; height: 140px; margin: 0; padding: 0; list-style: none;
  background: #dedede; border: 1px solid #ccc; border-top: 0; color: #12357a;
}
.dropdown li { height: 20px; display: flex; align-items: center; gap: 4px; padding: 0 0 3px 2px; white-space: nowrap; }
.dropdown li.hover { background: #c9c9c9; }
.dropdown .badge { margin-top: 3px; }
.hand { position: absolute; left: 128px; top: 204px; }

.scrollbar { width: 17px; display: flex; flex-direction: column; background: #f0f0f0; }
.sb-end { height: 34px; display: flex; align-items: center; justify-content: center; padding-top: 8px; }
.sb-thumb { flex: 1; background: #cdcdcd; }
.sb-low { height: 36px; display: flex; align-items: center; justify-content: center; }

.tooltip {
  position: absolute; left: 5px; top: 649px; width: 447px; height: 21px; background: #fff; border: 1px solid #767676;
  box-shadow: 2px 2px 3px #0005; font: 11.500px/19px "Open Sans", sans-serif; color: #444; padding-left: 6px; white-space: nowrap;
}

.runner {
  position: absolute; left: 923px; top: 502px; width: 437px; height: 165px; background: #fff;
  border: 2px solid #666; display: flex; flex-direction: column; font-family: "Open Sans", sans-serif; color: #222;
}
.runner-head { height: 29px; background: #e8e8e8; display: flex; align-items: center; gap: 9px; padding: 2px 0 0 3px; font-size: 12px; }
.runner-step { display: flex; align-items: center; gap: 5px; margin: 3px 0 0 20px; font-size: 13px; line-height: 18px; }
.runner-wait { margin: 3px 0 0 34px; font-size: 11.600px; line-height: 15px; }
.runner-prog { display: flex; align-items: center; margin: 42px 0 0 36px; }
.prog-track { width: 334px; height: 8px; border-top: 1px solid #999; }
.prog-fill { height: 7px; background: #3d8fe0; }
.prog-time { margin-left: 43px; font-size: 11px; color: #777; }
.runner-foot { display: flex; align-items: center; gap: 5px; margin: 5px 0 0 13px; font: 10.800px/12.500px "Open Sans", sans-serif; color: #888; }

/* taskbar */
.taskbar { height: 40px; flex: none; background: #050505; display: flex; align-items: stretch; }
.start { width: 48px; display: flex; align-items: center; justify-content: center; }
.cortana { width: 344px; background: #2f2f2f; display: flex; align-items: center; padding: 0 15px 0 9px; gap: 6px; font: 14.500px "Open Sans", sans-serif; color: #999; }
.ask { flex: 1; }
.tb-app { width: 49.200px; display: flex; align-items: center; justify-content: center; position: relative; }
.tb-app.view { width: 49px; }
.tb-app.run::after { content: ""; position: absolute; left: 4px; right: 5px; bottom: 0; height: 2px; background: #7ab8e0; }
.tb-app.active { background: #333; }
.tray { flex: 1; display: flex; align-items: center; justify-content: flex-end; gap: 8px; color: #fff; padding-right: 16px; }
.tray-up { margin-right: 2px; }
.clock { width: 70px; margin-left: -8px; text-align: center; font: 11.500px/19px "Open Sans", sans-serif; }
.notif { position: relative; width: 25px; height: 24px; margin-left: 2px; padding-top: 4px; }
.notif-n {
  position: absolute; left: 5px; bottom: -4px; width: 18px; height: 18px; border-radius: 50%; background: #333;
  text-align: center; font: 11px/18px "Open Sans", sans-serif;
}
```
